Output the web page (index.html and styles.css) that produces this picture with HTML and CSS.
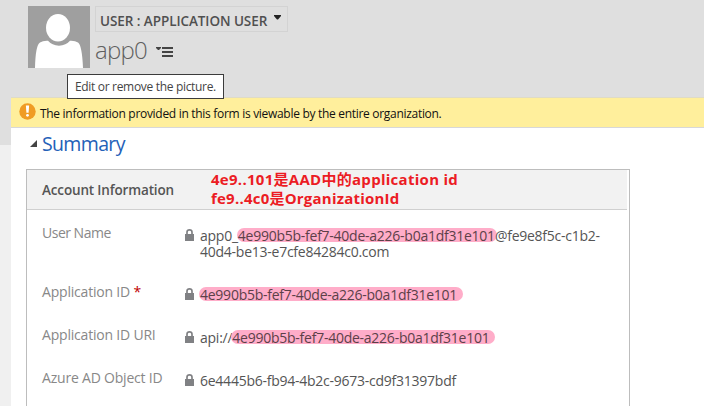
FILE: index.html
```html
<!DOCTYPE html>
<html lang="en">
<head>
<meta charset="utf-8">
<title>User: app0</title>
<link rel="stylesheet" href="styles.css">
</head>
<body>
<svg width="0" height="0" class="defs"><symbol id="lock" viewBox="0 0 9 12"><path d="M2 6V3.2Q2 .9 4.5 .9T7 3.2V6" fill="none" stroke="#808184" stroke-width="1.7"/><path d="M0 5h9v7H0z" fill="#808184"/></symbol></svg>
<header class="header">
  <div class="avatar">
    <svg width="62" height="62" viewBox="0 0 62 62"><path fill="#9f9f9f" d="M0 0h62v62H0z"/><ellipse cx="30" cy="21.700" rx="12" ry="13.800" fill="#fff"/><path d="M7 62Q7.500 39 12 36.500Q15 34.500 20 34.800Q24 39.500 31 39.700Q38 39.500 42 34.800Q47 34.500 50 36.500Q54 39 55 62Z" fill="#fff"/></svg>
    <div class="tooltip"><span>Edit or remove the picture.</span></div>
  </div>
  <div class="heading">
    <div class="form-picker"><span class="form-name">USER : APPLICATION USER</span><svg class="caret" width="7" height="5" viewBox="0 0 7 5"><path d="M0 0h7v1L4 4.500H3L0 1z" fill="#222"/></svg></div>
    <div class="record"><h1>app0</h1><svg width="18" height="11" viewBox="0 0 18 11"><path d="M0 0h5v1L3 3H2L0 1zM6 0h11v2H6zM6 4h11v2H6zM6 8h11v2H6z" fill="#444"/></svg></div>
  </div>
</header>
<div class="body">
  <div class="rail"></div>
  <main>
    <div class="notice"><svg width="17" height="17" viewBox="0 0 17 17"><circle cx="8.500" cy="8.500" r="8.200" fill="#f09c24"/><path d="M6.900 2.500h3.200l-.5 7.300H7.400z" fill="#fff"/><circle cx="8.500" cy="12.300" r="1.400" fill="#fff"/></svg><span>The information provided in this form is viewable by the entire organization.</span></div>
    <div class="section-title"><svg width="7" height="7" viewBox="0 0 7 7"><path d="M7 0v7H0z" fill="#444"/></svg><h2>Summary</h2></div>
    <section class="panel">
      <div class="panel-head"><h3>Account Information</h3><div class="note"><p class="note-a">4e9..101是AAD中的application id</p><p class="note-b">fe9..4c0是OrganizationId</p></div></div>
      <div class="row tall"><div class="label l1">User Name</div><svg class="lock"><use href="#lock"/></svg><div class="value">app0_<mark>4e990b5b-fef7-40de-a226-b0a1df31e101</mark>@fe9e8f5c-c1b2-<br>40d4-be13-e7cfe84284c0.com</div></div>
      <div class="row"><div class="label l2">Application ID <b>*</b></div><svg class="lock"><use href="#lock"/></svg><div class="value"><mark class="long">4e990b5b-fef7-40de-a226-b0a1df31e101</mark></div></div>
      <div class="row"><div class="label l3">Application ID URI</div><svg class="lock"><use href="#lock"/></svg><div class="value">api://<mark class="long">4e990b5b-fef7-40de-a226-b0a1df31e101</mark></div></div>
      <div class="row"><div class="label l4">Azure AD Object ID</div><svg class="lock"><use href="#lock"/></svg><div class="value">6e4445b6-fb94-4b2c-9673-cd9f31397bdf</div></div>
    </section>
  </main>
</div>
</body>
</html>
```
FILE: styles.css
```css
* { box-sizing: border-box; margin: 0; padding: 0; }
body { width: 704px; height: 406px; overflow: hidden; background: #fff; font-family: "Open Sans", "Noto Sans CJK SC", sans-serif; font-size: 14px; color: #444; }
svg { display: block; flex: none; }
.defs { position: absolute; }
.header { display: flex; height: 97px; padding: 6px 0 0 28px; background: #dfdfdf; }
.avatar { position: relative; width: 62px; height: 62px; margin-right: 5px; }
.tooltip { position: absolute; z-index: 2; left: 39px; top: 68px; width: 157px; height: 25px; padding-left: 7px; border: 1px solid #3c3c3c; background: #fff; font-size: 12px; line-height: 24px; letter-spacing: -.32px; white-space: nowrap; }
.form-picker { display: flex; width: 193px; height: 26px; padding-left: 4px; border: 1px solid #d3d3d3; }
.form-name { width: 174px; font-size: 13.5px; font-weight: 600; line-height: 28px; letter-spacing: -.07px; color: #505050; white-space: nowrap; }
.caret { margin-top: 8px; }
.record { display: flex; height: 36px; }
h1 { width: 61px; font-size: 24px; font-weight: 300; line-height: 35px; letter-spacing: -.8px; color: #606060; }
.record svg { margin-top: 15px; }
.body { display: flex; height: 309px; }
.rail { width: 11px; background: linear-gradient(#dfdfdf 48px, #f0f0f0 48px); }
main { flex: 1; }
.notice { display: flex; height: 31px; padding: 6px 0 0 8px; border-top: 1px solid #dfdbc6; border-bottom: 1px solid #d8d8d8; background: #ffef9c; color: #111; font-size: 12px; line-height: 20px; letter-spacing: -.3px; white-space: nowrap; }
.notice svg { margin: -1px 4px 0 0; }
.section-title { display: flex; height: 41px; padding-left: 19px; }
.section-title svg { margin: 12px 5px 0 0; }
h2 { font-size: 19.5px; font-weight: 400; line-height: 31px; letter-spacing: -.65px; color: #2461b8; }
.panel { width: 604px; height: 237px; margin-left: 15px; border: 1px solid #bdbdbd; border-bottom: 0; }
.panel-head { display: flex; width: 600px; height: 40px; border-bottom: 1px solid #d0d0d0; padding-left: 15px; background: #f2f2f2; }
h3 { width: 169px; font-size: 13.5px; font-weight: 600; line-height: 41px; letter-spacing: -.15px; color: #555; white-space: nowrap; }
.note { color: #ec1c24; font-size: 15px; font-weight: 700; line-height: 19px; white-space: nowrap; }
.note-a { letter-spacing: .28px; }
.note-b { letter-spacing: .22px; }
.row { display: flex; height: 43px; padding-left: 15px; }
.tall { height: 59px; }
.label { width: 143px; padding-top: 13px; line-height: 20px; letter-spacing: -.2px; color: #888; white-space: nowrap; }
.l1 { letter-spacing: -.5px; }
.label b { color: #c00000; font-weight: 400; }
.lock { width: 9px; height: 12px; margin: 19px 6px 0 0; }
.value { padding-top: 18px; line-height: 16px; letter-spacing: -.25px; white-space: nowrap; color: #555; }
mark { display: inline-block; height: 14px; line-height: 16px; margin: 0 -2px 0 -1px; padding: 0 2px 0 1px; border-radius: 7px; background: #ffadc9; color: #5c4048; }
.long { padding-right: 6px; }
```
